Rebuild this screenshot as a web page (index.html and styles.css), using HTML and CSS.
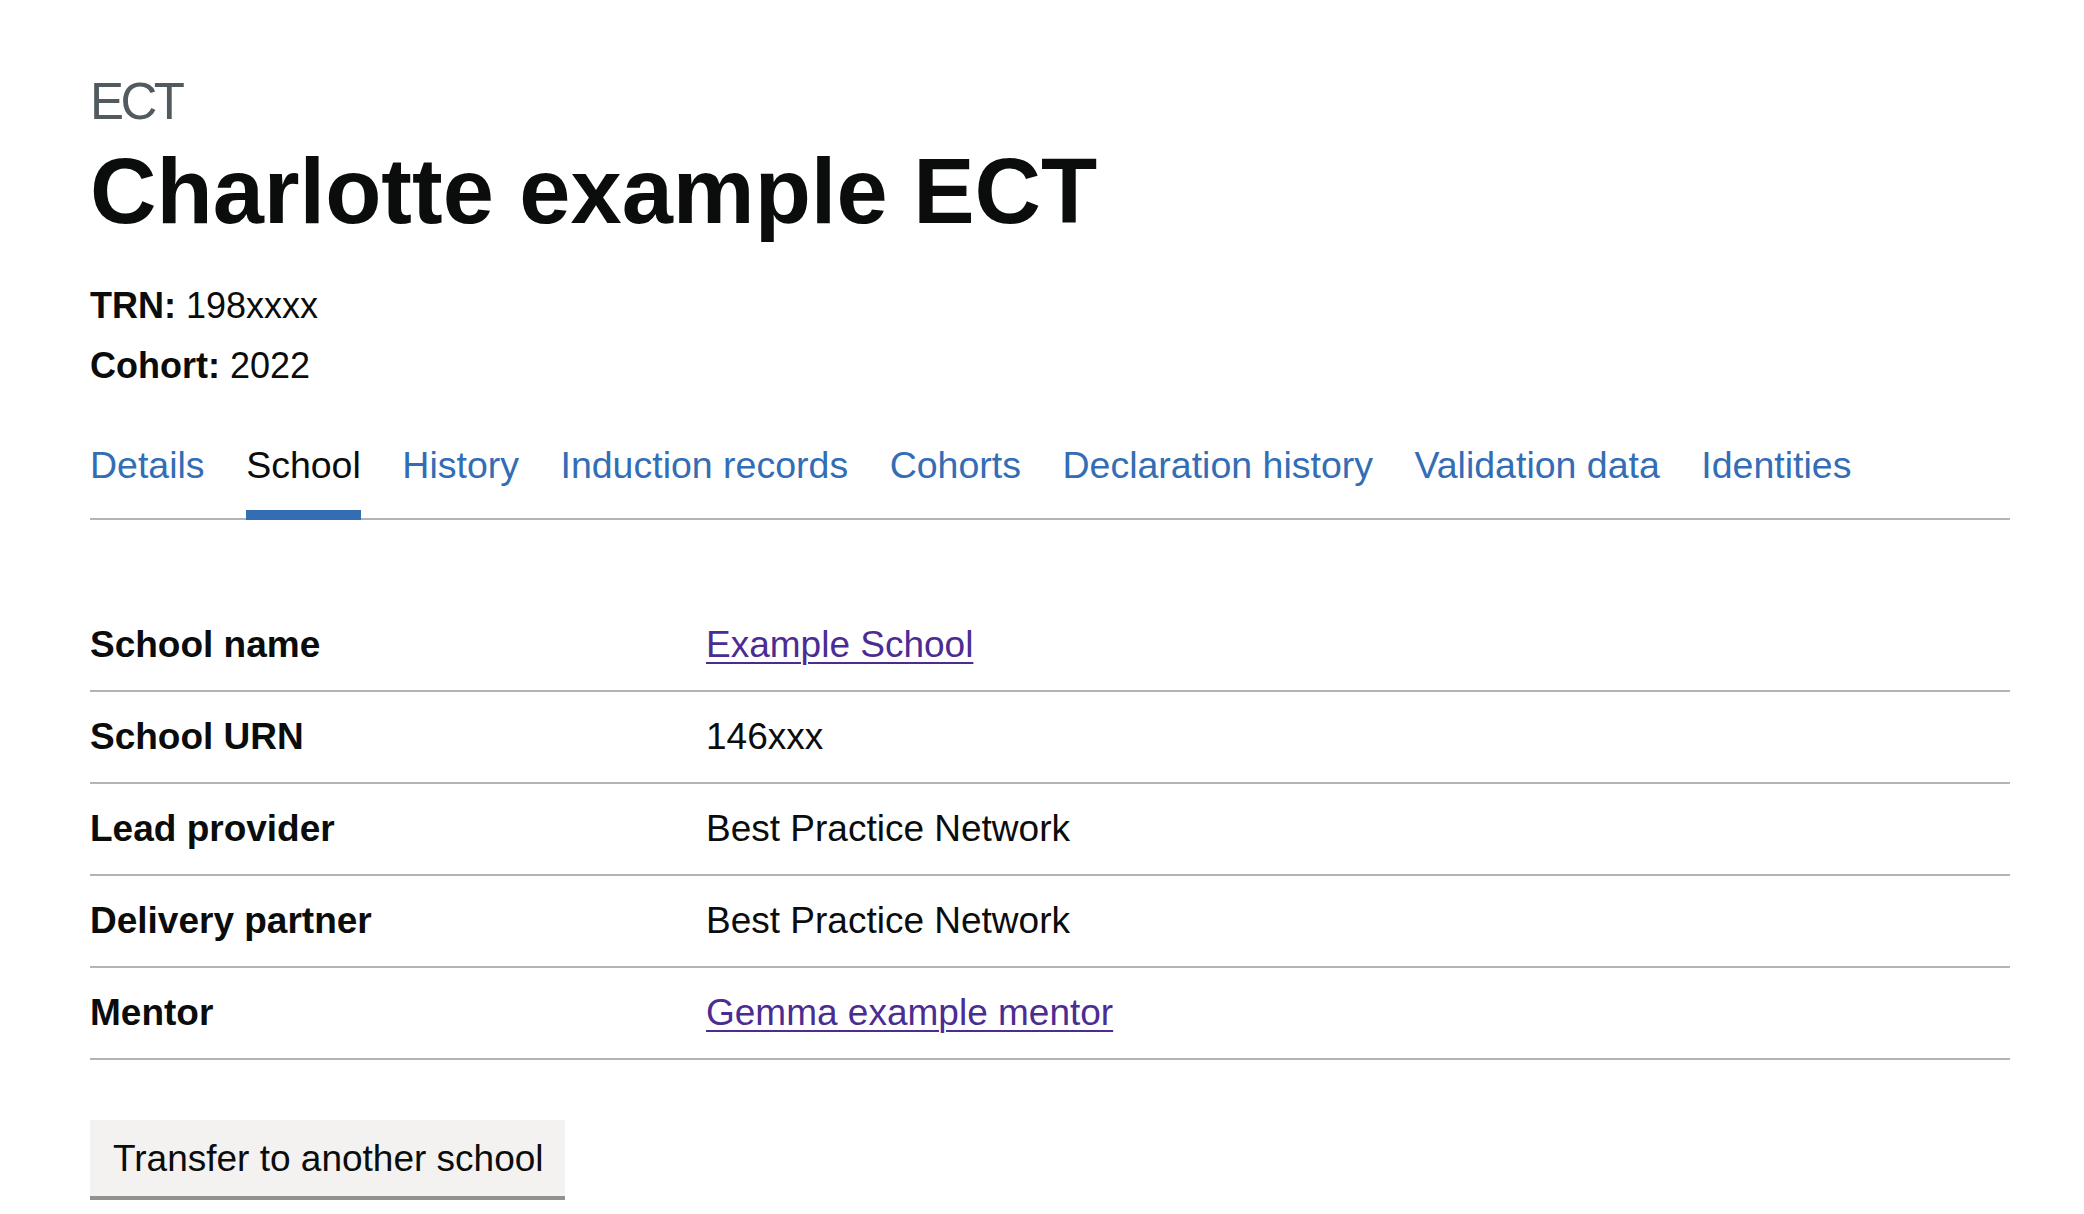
FILE: index.html
```html
<!DOCTYPE html>
<html lang="en">
<head>
<meta charset="utf-8">
<title>Charlotte example ECT</title>
<link rel="stylesheet" href="styles.css">
</head>
<body>
<main class="page">
  <span class="caption">ECT</span>
  <h1 class="heading">Charlotte example ECT</h1>
  <p class="meta"><strong>TRN:</strong> 198xxxx</p>
  <p class="meta meta-last"><strong>Cohort:</strong> 2022</p>

  <nav class="subnav">
    <ul class="subnav-list">
      <li><a class="subnav-link" href="#">Details</a></li>
      <li><a class="subnav-link is-current" href="#">School</a></li>
      <li><a class="subnav-link" href="#">History</a></li>
      <li><a class="subnav-link" href="#">Induction records</a></li>
      <li><a class="subnav-link" href="#">Cohorts</a></li>
      <li><a class="subnav-link" href="#">Declaration history</a></li>
      <li><a class="subnav-link" href="#">Validation data</a></li>
      <li><a class="subnav-link" href="#">Identities</a></li>
    </ul>
  </nav>

  <dl class="summary">
    <div class="summary-row">
      <dt class="summary-key">School name</dt>
      <dd class="summary-value"><a class="link" href="#">Example School</a></dd>
    </div>
    <div class="summary-row">
      <dt class="summary-key">School URN</dt>
      <dd class="summary-value">146xxx</dd>
    </div>
    <div class="summary-row">
      <dt class="summary-key">Lead provider</dt>
      <dd class="summary-value">Best Practice Network</dd>
    </div>
    <div class="summary-row">
      <dt class="summary-key">Delivery partner</dt>
      <dd class="summary-value">Best Practice Network</dd>
    </div>
    <div class="summary-row">
      <dt class="summary-key">Mentor</dt>
      <dd class="summary-value"><a class="link" href="#">Gemma example mentor</a></dd>
    </div>
  </dl>

  <button class="button" type="button">Transfer to another school</button>
</main>
</body>
</html>
```

FILE: styles.css
```css
* {
  box-sizing: border-box;
}

html, body {
  margin: 0;
  padding: 0;
  background: #ffffff;
}

body {
  font-family: "Liberation Sans", Arial, sans-serif;
  color: #0b0c0c;
}

.page {
  width: 1920px;
  margin: 0 0 0 90px;
  padding: 72px 0 40px;
}

.caption {
  display: block;
  font-size: 51px;
  line-height: 60px;
  letter-spacing: -3.5px;
  color: #505a5f;
  margin: 0 0 9px;
}

.heading {
  font-size: 92px;
  line-height: 100px;
  font-weight: 700;
  margin: 0 0 40px;
}

.meta {
  font-size: 36px;
  line-height: 50px;
  margin: 0 0 10px;
}

.meta strong {
  font-weight: 700;
}

.meta-last {
  margin-bottom: 0;
}

.subnav {
  margin-top: 39px;
}

.subnav-list {
  display: flex;
  gap: 41.5px;
  list-style: none;
  margin: 0;
  padding: 0;
  box-shadow: inset 0 -2px 0 #b1b4b6;
}

.subnav-link {
  display: block;
  font-size: 37.5px;
  line-height: 50px;
  padding: 10px 0 30px;
  color: #336db5;
  text-decoration: none;
}

.subnav-link.is-current {
  color: #0b0c0c;
  box-shadow: inset 0 -10px 0 #356db4;
}

.summary {
  margin: 80px 0 0;
  padding: 0;
}

.summary-row {
  display: grid;
  grid-template-columns: 616px 1fr;
  border-bottom: 2px solid #b1b4b6;
}

.summary-key,
.summary-value {
  margin: 0;
  padding: 20px 0;
  font-size: 37px;
  line-height: 50px;
}

.summary-key {
  font-weight: 700;
  padding-right: 40px;
}

.link {
  color: #4c2c92;
  text-decoration: underline;
  text-decoration-thickness: 2px;
  text-underline-offset: 5px;
}

.button {
  display: inline-block;
  margin-top: 60px;
  padding: 14px 21px 12px 23px;
  font-family: "Liberation Sans", Arial, sans-serif;
  font-size: 37px;
  line-height: 50px;
  color: #0b0c0c;
  background: #f3f2f1;
  border: 0;
  border-radius: 0;
  box-shadow: 0 4px 0 #929191;
  cursor: pointer;
}
```
